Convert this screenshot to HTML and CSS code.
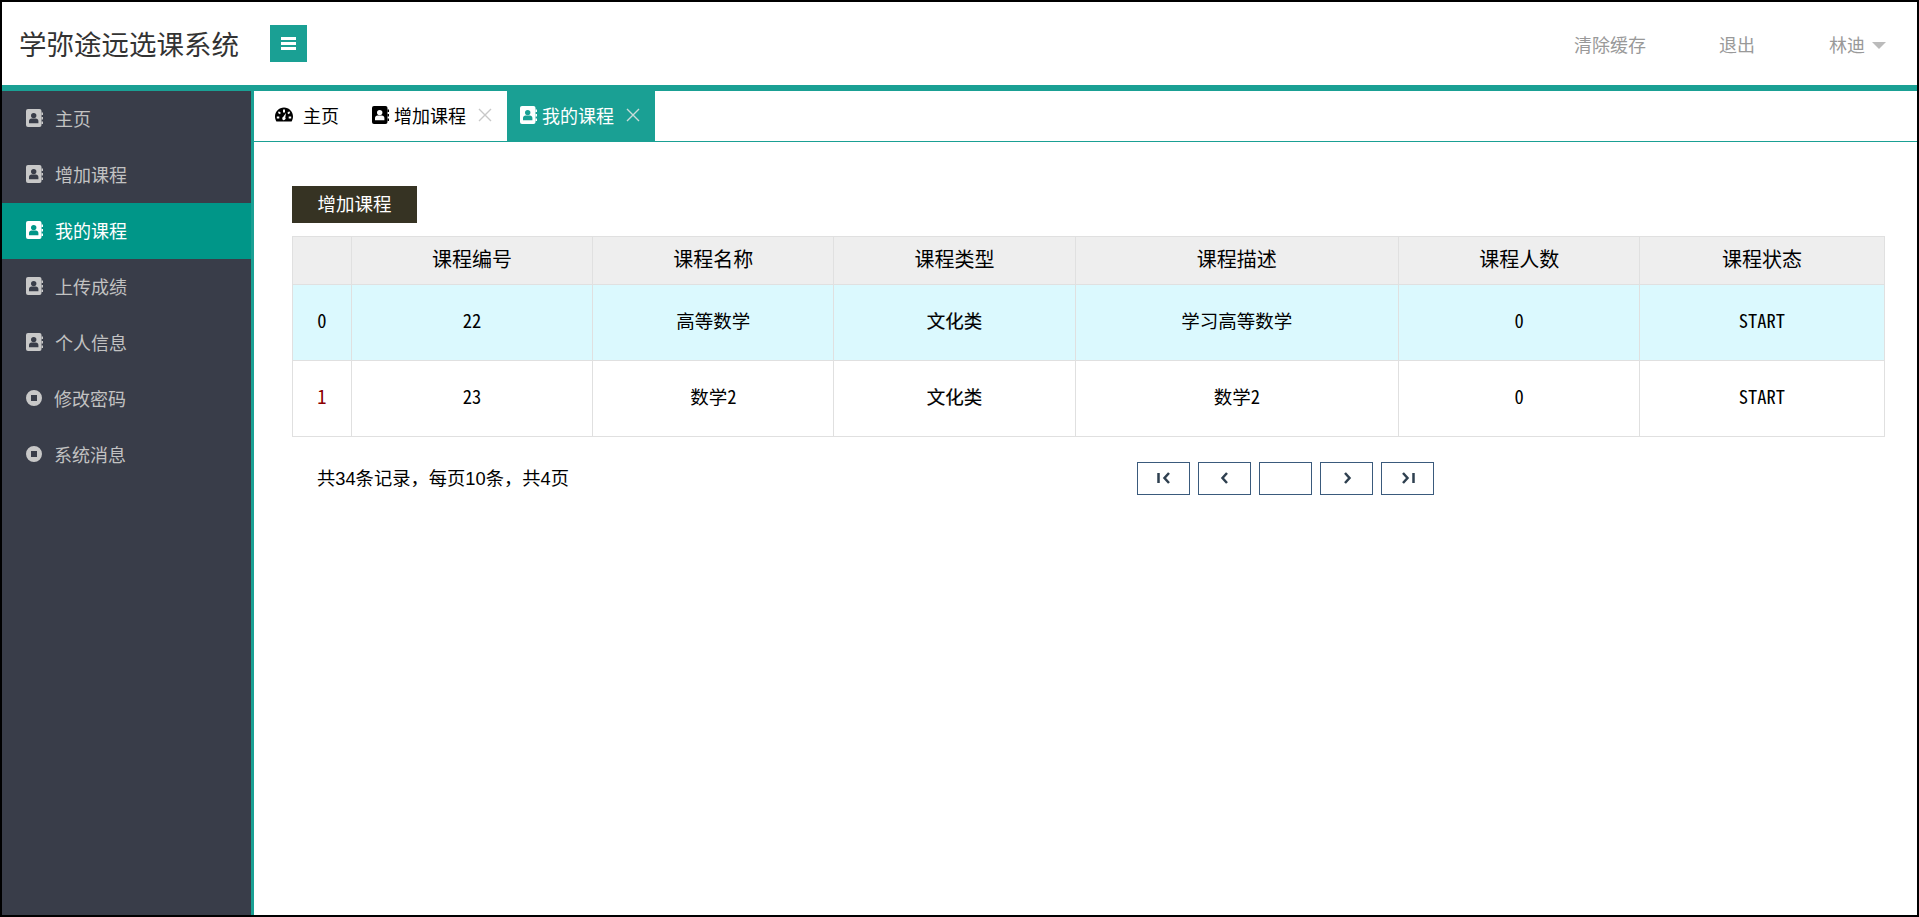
FILE: index.html
```html
<!DOCTYPE html>
<html lang="zh">
  <head>
    <meta charset="UTF-8" />
    <meta name="viewport" content="width=device-width, initial-scale=1.0" />
    <title>学弥途远选课系统</title>
    <link rel="stylesheet" href="styles.css">
  </head>
  <body>
    <svg class="defs" width="0" height="0">
      <symbol id="i-book" viewBox="0 0 17 18">
        <rect x="0" y="0" width="15.500" height="18" rx="2" fill="currentColor"/>
        <path d="M15.500 3.500H17v2.500h-1.500zM15.500 8H17v2.500h-1.500zM15.500 12.500H17V15h-1.500z" fill="currentColor"/>
        <circle cx="7.700" cy="6.600" r="2.700" fill="var(--cut)"/>
        <path d="M3 14.300v-2.300c0-1.500 1.200-2.500 2.500-2.500h4.400c1.300 0 2.500 1 2.500 2.500v2.300z" fill="var(--cut)"/>
      </symbol>
      <symbol id="i-stop" viewBox="0 0 16 16">
        <path fill-rule="evenodd" d="M8 0a8 8 0 1 1 0 16A8 8 0 0 1 8 0zM5 5v6h6V5z" fill="currentColor"/>
      </symbol>
    </svg>

    <div class="app">
      <header class="top">
        <div class="brand">学弥途远选课系统</div>
        <div class="toggle">
          <svg width="15" height="13" viewBox="0 0 15 13"><path d="M0 0h15v3H0zM0 5h15v3H0zM0 10h15v3H0z" fill="#fff"/></svg>
        </div>
        <nav class="top-nav">
          <a class="nav-clear">清除缓存</a>
          <a class="nav-exit">退出</a>
          <a class="nav-user">林迪<span class="caret"></span></a>
        </nav>
      </header>

      <div class="main">
        <aside class="sidebar">
          <div class="side-item"><svg class="side-icon"><use href="#i-book"/></svg>主页</div>
          <div class="side-item"><svg class="side-icon"><use href="#i-book"/></svg>增加课程</div>
          <div class="side-item active"><svg class="side-icon"><use href="#i-book"/></svg>我的课程</div>
          <div class="side-item"><svg class="side-icon"><use href="#i-book"/></svg>上传成绩</div>
          <div class="side-item"><svg class="side-icon"><use href="#i-book"/></svg>个人信息</div>
          <div class="side-item round"><svg class="side-icon"><use href="#i-stop"/></svg>修改密码</div>
          <div class="side-item round"><svg class="side-icon"><use href="#i-stop"/></svg>系统消息</div>
        </aside>

        <section class="page">
          <div class="tabs">
            <div class="tab tab-home">
              <svg class="gauge" width="18" height="15" viewBox="0 0 18 15">
                <path fill-rule="evenodd" d="M9 0.500c5 0 9 4 9 9 0 1.800-.5 3.500-1.400 5H1.400C.5 13 0 11.300 0 9.500c0-5 4-9 9-9zM8 2.500v3h2v-3zM3.800 4.300 3 6l2 1.200.8-1.500zM14.200 4.300 12.400 5.700l.8 1.500 2-1.200zM11 6 8.300 9.800a1.700 1.700 0 1 0 2 .6zM1.800 9.500v2h2.500v-2zM13.700 9.500v2h2.500v-2z" fill="#000"/>
              </svg>
              <span>主页</span>
            </div>
            <div class="tab tab-add">
              <svg class="tab-icon"><use href="#i-book"/></svg>
              <span>增加课程</span>
              <svg class="close" width="14" height="14" viewBox="0 0 14 14"><path d="M1 1l12 12M13 1L1 13" stroke="#c8c8c8" stroke-width="1.400"/></svg>
            </div>
            <div class="tab tab-mine">
              <svg class="tab-icon"><use href="#i-book"/></svg>
              <span>我的课程</span>
              <svg class="close" width="14" height="14" viewBox="0 0 14 14"><path d="M1 1l12 12M13 1L1 13" stroke="#c8dcd9" stroke-width="1.400"/></svg>
            </div>
          </div>

          <div class="content">
            <button class="add-btn">增加课程</button>

            <table class="course-table">
              <colgroup>
                <col class="c-idx"><col class="c-std"><col class="c-std"><col class="c-std"><col class="c-desc"><col class="c-std"><col class="c-last">
              </colgroup>
              <thead>
                <tr>
                  <th></th>
                  <th>课程编号</th>
                  <th>课程名称</th>
                  <th>课程类型</th>
                  <th>课程描述</th>
                  <th>课程人数</th>
                  <th>课程状态</th>
                </tr>
              </thead>
              <tbody>
                <tr class="hl">
                  <td>0</td>
                  <td>22</td>
                  <td>高等数学</td>
                  <td class="bold">文化类</td>
                  <td>学习高等数学</td>
                  <td>0</td>
                  <td>START</td>
                </tr>
                <tr>
                  <td class="row-no">1</td>
                  <td>23</td>
                  <td>数学2</td>
                  <td class="bold">文化类</td>
                  <td>数学2</td>
                  <td>0</td>
                  <td>START</td>
                </tr>
              </tbody>
            </table>

            <div class="pager-row">
              <div class="pager-info">共34条记录，每页10条，共4页</div>
              <div class="pager">
                <button class="pg"><svg width="14" height="12" viewBox="0 0 14 12"><path d="M1.500 1v10M12 1L7.500 6l4.500 5" class="pg-line"/></svg></button>
                <button class="pg"><svg width="14" height="12" viewBox="0 0 14 12"><path d="M9 1L4.500 6 9 11" class="pg-line"/></svg></button>
                <input class="pg pg-input" type="text">
                <button class="pg"><svg width="14" height="12" viewBox="0 0 14 12"><path d="M5 1l4.500 5L5 11" class="pg-line"/></svg></button>
                <button class="pg"><svg width="14" height="12" viewBox="0 0 14 12"><path d="M2 1l4.500 5L2 11M12.500 1v10" class="pg-line"/></svg></button>
              </div>
            </div>
          </div>
        </section>
      </div>
    </div>
  </body>
</html>
```

FILE: styles.css
```css
:root {
  --teal: #1aa094;
  --teal-dark: #009688;
  --side-bg: #393d49;
  --line: #e0e0e0;
  --cut: #393d49;
  font-family: "Noto Sans CJK SC", "Liberation Sans", sans-serif;
}

* {
  box-sizing: border-box;
}

body {
  margin: 0;
  background-color: #fff;
}

.defs {
  position: absolute;
}

.app {
  height: 917px;
  border: 2px solid #000;
  display: flex;
  flex-direction: column;
}

/* top bar */
.top {
  height: 89px;
  flex-shrink: 0;
  border-bottom: 6px solid var(--teal);
  display: flex;
  align-items: center;
  padding-left: 17px;
}

.brand {
  font-size: 27.500px;
  color: #333;
  width: 251px;
  line-height: 83px;
  white-space: nowrap;
}

.toggle {
  width: 37px;
  height: 37px;
  background-color: var(--teal);
  display: flex;
  align-items: center;
  justify-content: center;
}

.top-nav {
  margin-left: auto;
  display: flex;
  align-items: center;
  font-size: 18px;
  color: #999;
  margin-right: 31px;
}

.nav-exit {
  margin-left: 73px;
}

.nav-user {
  margin-left: 74px;
  display: flex;
  align-items: center;
}

.caret {
  margin-left: 7px;
  margin-top: 3px;
  border-left: 7px solid transparent;
  border-right: 7px solid transparent;
  border-top: 7px solid #bbb;
}

.main {
  flex-grow: 1;
  display: flex;
  min-height: 0;
}

/* sidebar */
.sidebar {
  width: 252px;
  flex-shrink: 0;
  background-color: var(--side-bg);
  border-right: 3px solid var(--teal);
}

.side-item {
  height: 56px;
  display: flex;
  align-items: center;
  padding-left: 24px;
  padding-bottom: 3px;
  font-size: 18px;
  color: #c2c2c2;
}

.side-icon {
  width: 17px;
  height: 18px;
  margin-right: 12px;
  color: #c8c8c8;
}

.side-item.round .side-icon {
  width: 16px;
  height: 16px;
  margin-right: 12px;
}

.side-item.active {
  background-color: var(--teal-dark);
  color: #fff;
  --cut: #009688;
}

.side-item.active .side-icon {
  color: #fff;
}

/* tabs */
.page {
  flex-grow: 1;
  min-width: 0;
}

.tabs {
  height: 51px;
  border-bottom: 1px solid var(--teal);
  display: flex;
  font-size: 18px;
  color: #000;
}

.tab {
  height: 50px;
  display: flex;
  align-items: center;
  padding-bottom: 3px;
}

.tab-home {
  width: 118px;
  padding-left: 21px;
}

.gauge {
  margin-right: 10px;
}

.tab-add {
  width: 135px;
  padding-left: 0;
  --cut: #fff;
}

.tab-icon {
  width: 17px;
  height: 18px;
  margin-right: 5px;
}

.tab-add .tab-icon {
  color: #000;
}

.close {
  margin-left: 12px;
}

.tab-mine {
  width: 148px;
  padding-left: 13px;
  background-color: var(--teal);
  color: #fff;
  --cut: #1aa094;
}

.tab-mine .tab-icon {
  color: #fff;
}

/* content */
.content {
  padding: 44px 33px 0 38px;
}

.add-btn {
  display: block;
  width: 125px;
  height: 37px;
  padding: 0 0 3px;
  border: none;
  background-color: #363323;
  color: #fff;
  font-family: inherit;
  font-size: 18.500px;
}

.course-table {
  width: 100%;
  margin-top: 13px;
  table-layout: fixed;
  border-collapse: collapse;
  color: #000;
  font-feature-settings: "hwid";
}

.c-idx {
  width: 59px;
}

.c-std {
  width: 241.200px;
}

.c-desc {
  width: 323.500px;
}

.c-last {
  width: 244.500px;
}

.course-table th,
.course-table td {
  border: 1px solid var(--line);
  text-align: center;
  padding: 0;
}

.course-table th {
  height: 48px;
  font-size: 20px;
  font-weight: normal;
  background-color: #eee;
  padding-bottom: 4px;
}

.course-table td {
  height: 76px;
  font-size: 18.500px;
  padding-bottom: 5px;
}

.course-table .hl td {
  background-color: #dbf9fe;
}

.course-table .bold {
  -webkit-text-stroke: 0.2px #000;
}

.course-table .row-no {
  color: #8b0000;
}

/* pagination */
.pager-row {
  margin-top: 24px;
  display: flex;
  align-items: center;
  height: 34px;
}

.pager-info {
  width: 845px;
  padding-left: 25px;
  padding-bottom: 2px;
  font-family: "Liberation Sans", "Noto Sans CJK SC", sans-serif;
  font-size: 18.300px;
  color: #000;
}

.pager {
  display: flex;
  gap: 8px;
}

.pg {
  width: 53px;
  height: 33px;
  padding: 0;
  border: 1px solid #3a5a7c;
  background-color: #fff;
  display: flex;
  align-items: center;
  justify-content: center;
}

.pg-line {
  fill: none;
  stroke: #2f4050;
  stroke-width: 2.500;
}
```
